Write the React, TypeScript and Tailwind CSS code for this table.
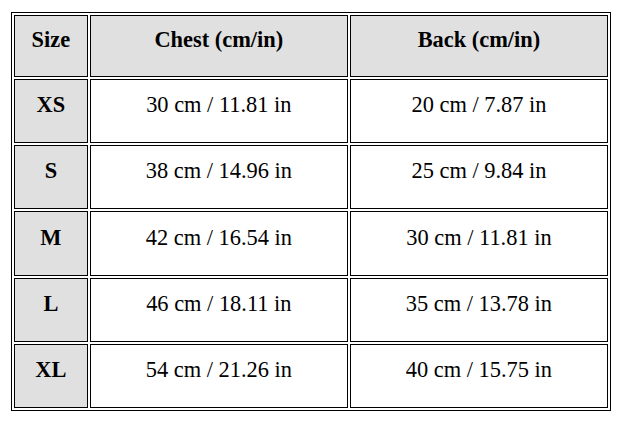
const rows = [
  { size: "XS", chest: "30 cm / 11.81 in", back: "20 cm / 7.87 in" },
  { size: "S", chest: "38 cm / 14.96 in", back: "25 cm / 9.84 in" },
  { size: "M", chest: "42 cm / 16.54 in", back: "30 cm / 11.81 in" },
  { size: "L", chest: "46 cm / 18.11 in", back: "35 cm / 13.78 in" },
  { size: "XL", chest: "54 cm / 21.26 in", back: "40 cm / 15.75 in" },
];

export default function App() {
  return (
    <div className="w-[622px] h-[426px] bg-white pt-[12px] font-['Liberation_Serif',serif] text-black">
      <table className="mx-auto w-[600px] border border-black border-separate border-spacing-[2px] text-[22.4px]">
        <thead>
          <tr className="h-[62px]">
            <th className="w-[12.5%] border border-black bg-[#e0e0e0] font-bold pb-[12px]">Size</th>
            <th className="border border-black bg-[#e0e0e0] font-bold pb-[12px]">Chest (cm/in)</th>
            <th className="border border-black bg-[#e0e0e0] font-bold pb-[12px]">Back (cm/in)</th>
          </tr>
        </thead>
        <tbody>
          {rows.map((r) => (
            <tr key={r.size} className="h-[64.2px]">
              <th className="border border-black bg-[#e0e0e0] font-bold pb-[12px]">{r.size}</th>
              <td className="border border-black text-center pb-[12px]">{r.chest}</td>
              <td className="border border-black text-center pb-[12px]">{r.back}</td>
            </tr>
          ))}
        </tbody>
      </table>
    </div>
  );
}
